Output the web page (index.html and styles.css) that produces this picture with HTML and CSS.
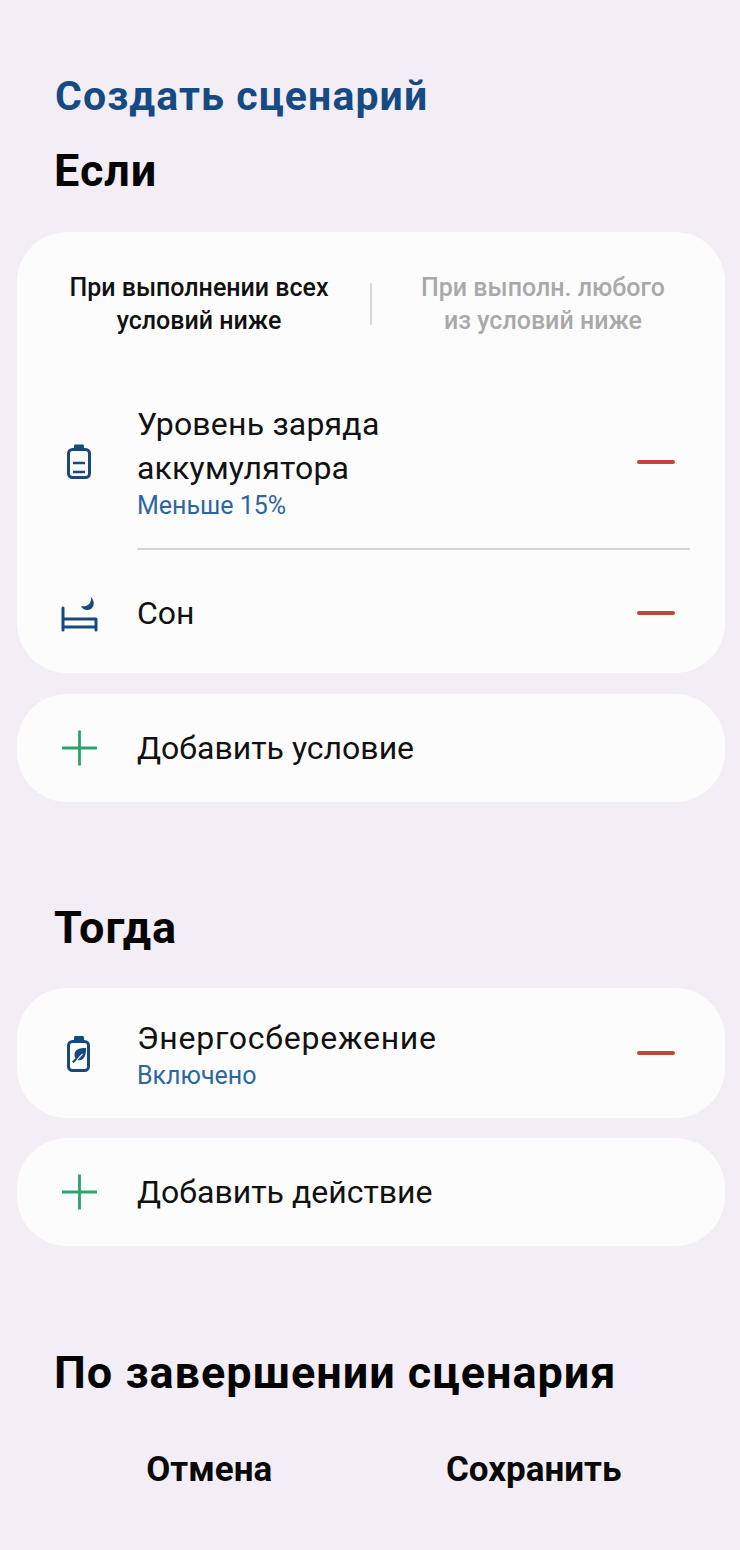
FILE: index.html
```html
<!DOCTYPE html>
<html lang="ru">
<head>
  <meta charset="UTF-8">
  <title>Создать сценарий</title>
  <link rel="stylesheet" href="styles.css">
</head>
<body>
  <div class="container">
    <h1 class="page-title">Создать сценарий</h1>
    <h2 class="section-title if-title">Если</h2>

    <div class="card conditions">
      <div class="mode-switch">
        <div class="mode active">При выполнении всех<br>условий ниже</div>
        <div class="mode-divider"></div>
        <div class="mode">При выполн. любого<br>из условий ниже</div>
      </div>

      <div class="row row-battery">
        <svg class="row-icon" width="44" height="44" viewBox="0 0 44 44" fill="none" stroke="#17497f" stroke-width="3">
          <path d="M17 8.500v-2.500c0-1 .6-1.500 1.500-1.500h7c.9 0 1.500 .5 1.500 1.500v2.500z" fill="#17497f" stroke="none"/>
          <rect x="11.500" y="9.500" width="21" height="28" rx="4"/>
          <path d="M16 23h12M16 32h12" stroke-width="2.400"/>
        </svg>
        <div class="row-divided">
          <div class="row-text">
            <div class="row-name name-battery">Уровень заряда<br>аккумулятора</div>
            <div class="row-value">Меньше 15%</div>
          </div>
          <div class="remove"></div>
        </div>
      </div>

      <div class="row row-sleep">
        <svg class="row-icon" width="44" height="44" viewBox="0 0 44 44" fill="none" stroke="#17497f" stroke-width="3">
          <path d="M6 17v22M6 28h33M6 36h33M39 28v11" stroke-linecap="round"/>
          <path d="M34 6c5 5 3 13-4 13-2.500 0-5-1.500-6-4 5 1.500 11-2 10-9z" fill="#17497f" stroke="none"/>
        </svg>
        <div class="row-text">
          <div class="row-name">Сон</div>
        </div>
        <div class="remove"></div>
      </div>
    </div>

    <div class="card add-card">
      <svg class="row-icon" width="44" height="44" viewBox="0 0 44 44" stroke="#2aa36c" stroke-width="2.8">
        <path d="M22.500 4.500v35M5 22h35"/>
      </svg>
      <div class="row-name">Добавить условие</div>
    </div>

    <h2 class="section-title then-title">Тогда</h2>

    <div class="card action">
      <svg class="row-icon" width="44" height="44" viewBox="0 0 44 44" fill="none" stroke="#17497f" stroke-width="3">
        <path d="M17 9.500v-3c0-1 .6-1.500 1.500-1.500h7c.9 0 1.500 .5 1.500 1.500v3z" fill="#17497f" stroke="none"/>
        <rect x="11.500" y="10.500" width="20" height="29" rx="4"/>
        <path d="M29 17c-7 0-11.500 1.500-11.500 7 0 1.500 .5 2.500 1 3.300l-3.500 3.200 1.500 1.500 3.500-3.200c6 2.200 9.500-3.800 9-11.800z" fill="#17497f" stroke="none"/>
        <path d="M20 28.800l5.500-6" stroke="#fdfcfd" stroke-width="1.200"/>
      </svg>
      <div class="row-text">
        <div class="row-name name-wide">Энергосбережение</div>
        <div class="row-value">Включено</div>
      </div>
      <div class="remove"></div>
    </div>

    <div class="card add-card">
      <svg class="row-icon" width="44" height="44" viewBox="0 0 44 44" stroke="#2aa36c" stroke-width="2.8">
        <path d="M22.500 4.500v35M5 22h35"/>
      </svg>
      <div class="row-name">Добавить действие</div>
    </div>

    <h2 class="section-title finish-title">По завершении сценария</h2>

    <div class="buttons">
      <div class="btn">Отмена</div>
      <div class="btn">Сохранить</div>
    </div>
  </div>
</body>
</html>
```

FILE: styles.css
```css
html, body {
  margin: 0;
  height: 100%;
}

body {
  font-family: Roboto, 'Liberation Sans', sans-serif;
  background-color: #f3eef5;
  color: #0c0c0c;
  overflow: hidden;
}

.container {
  padding: 0 15px 0 17px;
}

.page-title {
  margin: 0;
  padding: 72px 0 0 38px;
  font-size: 41px;
  line-height: 48px;
  font-weight: 700;
  letter-spacing: 1.1px;
  color: #164a82;
}

.section-title {
  margin: 0;
  padding-left: 37px;
  font-size: 45px;
  line-height: 50px;
  font-weight: 700;
  letter-spacing: 1px;
  color: #050505;
}

.if-title {
  margin-top: 26px;
}

.then-title {
  margin-top: 101px;
}

.finish-title {
  margin-top: 102px;
}

.card {
  background-color: #fdfcfd;
  border-radius: 50px;
}

.conditions {
  margin-top: 36px;
  height: 441px;
}

.mode-switch {
  display: flex;
  align-items: center;
  padding: 39px 11px 0;
}

.mode {
  flex: 1;
  text-align: center;
  font-size: 25px;
  line-height: 33px;
  font-weight: 500;
  color: #a9a9a9;
}

.mode.active {
  color: #111;
}

.mode-divider {
  width: 2px;
  height: 42px;
  background-color: #d6d6d6;
}

.row {
  display: flex;
  align-items: center;
  padding: 0 50px 0 40px;
}

.row-icon {
  flex-shrink: 0;
}

.row-text {
  flex: 1;
  margin-left: 36px;
}

.row-name {
  font-size: 32px;
  line-height: 44px;
  color: #111;
}

.name-battery {
  letter-spacing: 0.2px;
}

.name-wide {
  letter-spacing: 0.75px;
}

.row-value {
  margin-top: 1px;
  font-size: 25px;
  line-height: 30px;
  color: #2b66a0;
}

.remove {
  width: 38px;
  height: 4px;
  border-radius: 2px;
  background-color: #c4433e;
}

.row-battery {
  align-items: flex-start;
  margin-top: 65px;
  padding-right: 35px;
}

.row-battery .row-icon {
  margin-top: 38px;
}

.row-divided {
  flex: 1;
  display: flex;
  height: 148px;
  box-sizing: border-box;
  margin-left: 36px;
  padding-right: 15px;
  border-bottom: 2px solid #d4d4d4;
}

.row-divided .row-text {
  margin-left: 0;
}

.row-divided .remove {
  margin-top: 58px;
}

.row-sleep {
  height: 125px;
}

.add-card {
  display: flex;
  align-items: center;
  height: 108px;
  margin-top: 21px;
  padding-left: 40px;
}

.add-card .row-name {
  margin-left: 36px;
}

.action {
  display: flex;
  align-items: center;
  height: 130px;
  margin-top: 35px;
  padding: 0 50px 0 40px;
}

.action + .add-card {
  margin-top: 20px;
}

.buttons {
  display: flex;
  margin-top: 52px;
  padding: 0 29px 0 30px;
  font-weight: 700;
}

.btn {
  flex: 1;
  text-align: center;
  font-size: 35px;
  line-height: 40px;
  color: #0a0a0a;
}
```
